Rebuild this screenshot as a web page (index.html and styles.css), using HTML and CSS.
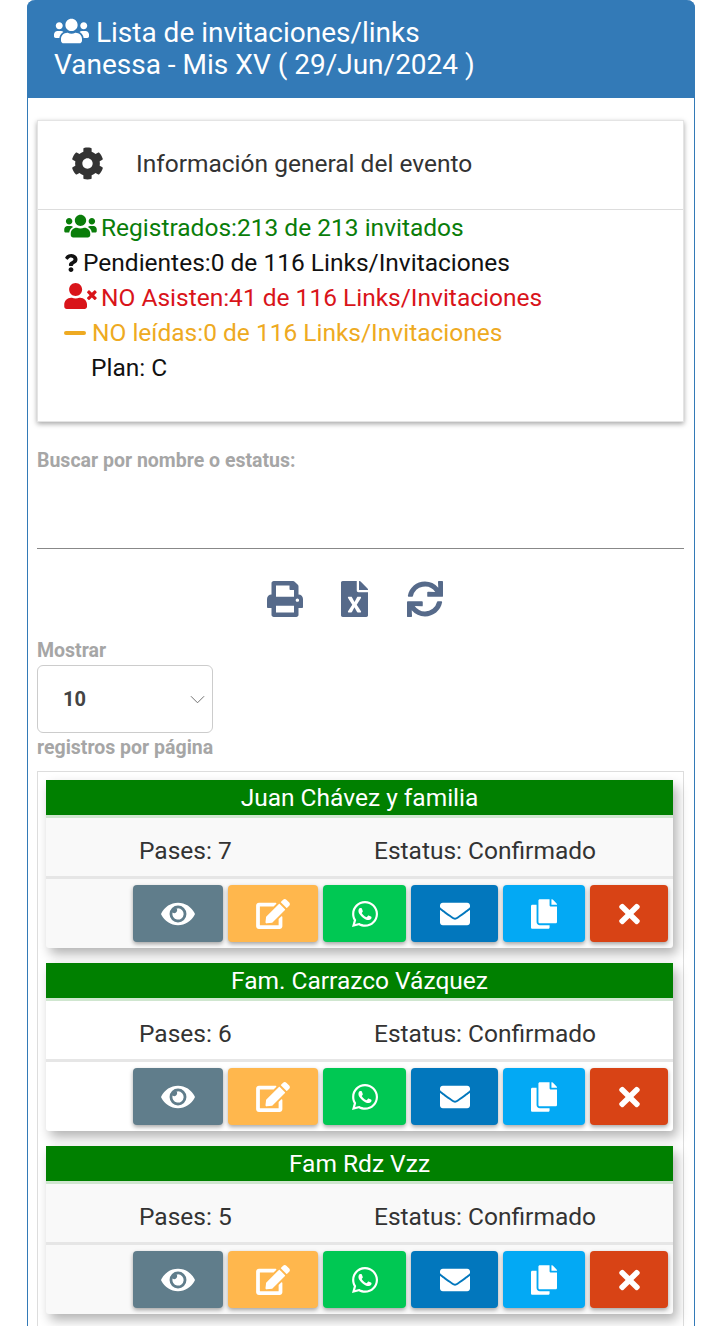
FILE: index.html
```html
<!DOCTYPE html>
<html>

<head>
  <meta charset="utf-8">
  <meta name="viewport" content="width=device-width, initial-scale=1.0">
  <title>Lista de invitaciones</title>
  <link rel="stylesheet" href="styles.css">
</head>

<body>
  <!-- icon set, used below with <use> -->
  <svg class="icon-defs" xmlns="http://www.w3.org/2000/svg">
    <symbol id="i-users" viewBox="0 0 640 512"><path d="M96 224c35.3 0 64-28.7 64-64s-28.7-64-64-64-64 28.7-64 64 28.7 64 64 64zm448 0c35.3 0 64-28.7 64-64s-28.7-64-64-64-64 28.7-64 64 28.7 64 64 64zm32 32h-64c-17.6 0-33.5 7.1-45.1 18.6 40.3 22.1 68.9 62 75.1 109.4h66c17.7 0 32-14.3 32-32v-32c0-35.3-28.7-64-64-64zm-256 0c61.9 0 112-50.1 112-112S381.9 32 320 32 208 82.1 208 144s50.1 112 112 112zm76.8 32h-8.3c-20.8 10-43.9 16-68.5 16s-47.6-6-68.5-16h-8.3C179.6 288 128 339.6 128 403.2V432c0 26.5 21.5 48 48 48h288c26.5 0 48-21.5 48-48v-28.8c0-63.6-51.6-115.2-115.2-115.2zm-223.7-13.4C161.5 263.1 145.6 256 128 256H64c-35.3 0-64 28.7-64 64v32c0 17.7 14.3 32 32 32h65.9c6.3-47.4 34.9-87.3 75.2-109.4z"/></symbol>
    <symbol id="i-cog" viewBox="0 0 512 512"><path d="M487.4 315.7l-42.6-24.6c4.3-23.2 4.3-47 0-70.2l42.6-24.6c4.9-2.8 7.1-8.6 5.5-14-11.1-35.6-30-67.8-54.7-94.6-3.8-4.1-10-5.1-14.8-2.3L380.8 110c-17.9-15.4-38.5-27.3-60.8-35.1V25.8c0-5.6-3.9-10.5-9.4-11.7-36.7-8.2-74.3-7.8-109.2 0-5.5 1.2-9.4 6.1-9.4 11.7V75c-22.2 7.9-42.8 19.8-60.8 35.1L88.7 85.5c-4.9-2.8-11-1.9-14.8 2.3-24.7 26.7-43.6 58.9-54.7 94.6-1.7 5.4.6 11.2 5.5 14L67.3 221c-4.3 23.2-4.3 47 0 70.2l-42.6 24.6c-4.9 2.8-7.1 8.6-5.5 14 11.1 35.6 30 67.8 54.7 94.6 3.8 4.1 10 5.1 14.8 2.3l42.6-24.6c17.9 15.4 38.5 27.3 60.8 35.1v49.2c0 5.6 3.9 10.5 9.4 11.7 36.7 8.2 74.3 7.8 109.2 0 5.5-1.2 9.4-6.1 9.4-11.7v-49.2c22.2-7.9 42.8-19.8 60.8-35.1l42.6 24.6c4.9 2.8 11 1.9 14.8-2.3 24.7-26.7 43.6-58.9 54.7-94.6 1.5-5.5-.7-11.3-5.6-14.1zM256 336c-44.1 0-80-35.9-80-80s35.9-80 80-80 80 35.9 80 80-35.9 80-80 80z"/></symbol>
    <symbol id="i-question" viewBox="0 0 384 512"><path d="M202.021 0C122.202 0 70.503 32.703 29.914 91.026c-7.363 10.58-5.093 25.086 5.178 32.874l43.138 32.709c10.373 7.865 25.132 6.026 33.253-4.148 25.049-31.381 43.63-49.449 82.757-49.449 30.764 0 68.816 19.799 68.816 49.631 0 22.552-18.617 34.134-48.993 51.164-35.423 19.86-82.299 44.576-82.299 106.405V320c0 13.255 10.745 24 24 24h72.471c13.255 0 24-10.745 24-24v-5.773c0-42.86 125.268-44.645 125.268-160.627C377.504 66.256 286.902 0 202.021 0zM192 373.459c-38.196 0-69.271 31.075-69.271 69.271 0 38.195 31.075 69.27 69.271 69.27s69.271-31.075 69.271-69.271-31.075-69.27-69.271-69.27z"/></symbol>
    <symbol id="i-user-times" viewBox="0 0 640 512"><path d="M589.6 240l45.6-45.6c6.3-6.3 6.3-16.5 0-22.8l-22.8-22.8c-6.3-6.3-16.5-6.3-22.8 0L544 194.4l-45.6-45.6c-6.3-6.3-16.5-6.3-22.8 0l-22.8 22.8c-6.3 6.3-6.3 16.5 0 22.8l45.6 45.6-45.6 45.6c-6.3 6.3-6.3 16.5 0 22.8l22.8 22.8c6.3 6.3 16.5 6.3 22.8 0l45.6-45.6 45.6 45.6c6.3 6.3 16.5 6.3 22.8 0l22.8-22.8c6.3-6.3 6.3-16.5 0-22.8L589.6 240zM224 256c70.7 0 128-57.3 128-128S294.7 0 224 0 96 57.3 96 128s57.3 128 128 128zm89.6 32h-16.7c-22.2 10.2-46.9 16-72.9 16s-50.6-5.8-72.9-16h-16.7C60.2 288 0 348.2 0 422.4V464c0 26.5 21.5 48 48 48h352c26.5 0 48-21.5 48-48v-41.6c0-74.2-60.2-134.4-134.4-134.4z"/></symbol>
    <symbol id="i-print" viewBox="0 0 512 512"><path d="M448 192V77.25c0-8.49-3.37-16.62-9.37-22.63L393.37 9.37c-6-6-14.14-9.37-22.63-9.37H96C78.33 0 64 14.33 64 32v160c-35.35 0-64 28.65-64 64v112c0 8.84 7.16 16 16 16h48v96c0 17.67 14.33 32 32 32h320c17.67 0 32-14.33 32-32v-96h48c8.84 0 16-7.16 16-16V256c0-35.35-28.65-64-64-64zm-64 256H128v-96h256v96zm0-224H128V64h192v48c0 8.84 7.16 16 16 16h48v96zm48 72c-13.25 0-24-10.75-24-24 0-13.26 10.75-24 24-24s24 10.74 24 24c0 13.25-10.75 24-24 24z"/></symbol>
    <symbol id="i-excel" viewBox="0 0 384 512"><path d="M224 136V0H24C10.7 0 0 10.7 0 24v464c0 13.3 10.7 24 24 24h336c13.3 0 24-10.7 24-24V160H248c-13.2 0-24-10.8-24-24zm60.1 106.5L224 336l60.1 93.5c5.1 8-.6 18.5-10.1 18.5h-34.9c-4.4 0-8.5-2.4-10.6-6.3C208.9 405.5 192 373 192 373c-6.4 14.8-10 20-36.6 68.8-2.1 3.9-6.1 6.3-10.5 6.3H110c-9.5 0-15.2-10.5-10.1-18.5l60.3-93.5-60.3-93.5c-5.2-8 .6-18.5 10.1-18.5h34.8c4.4 0 8.5 2.4 10.6 6.3 26.1 48.8 20 33.6 36.6 68.5 0 0 6.1-11.7 36.6-68.5 2.1-3.9 6.2-6.3 10.6-6.3H274c9.5-.1 15.2 10.4 10.1 18.4zM384 121.9v6.1H256V0h6.1c6.4 0 12.5 2.5 17 7l97.9 98c4.5 4.5 7 10.6 7 16.9z"/></symbol>
    <symbol id="i-sync" viewBox="0 0 512 512"><path d="M440.65 12.57l4 82.77A247.16 247.16 0 0 0 255.83 8C134.73 8 33.91 94.92 12.29 209.82A12 12 0 0 0 24.09 224h49.05a12 12 0 0 0 11.67-9.26 175.91 175.91 0 0 1 317-56.94l-101.46-4.86a12 12 0 0 0-12.57 12v47.41a12 12 0 0 0 12 12H500a12 12 0 0 0 12-12V12a12 12 0 0 0-12-12h-47.37a12 12 0 0 0-11.98 12.57zM255.83 432a175.61 175.61 0 0 1-146-77.8l101.8 4.87a12 12 0 0 0 12.57-12v-47.4a12 12 0 0 0-12-12H12a12 12 0 0 0-12 12V500a12 12 0 0 0 12 12h47.35a12 12 0 0 0 12-12.6l-4.15-82.57A247.17 247.17 0 0 0 255.83 504c121.11 0 221.93-86.92 243.55-201.82a12 12 0 0 0-11.8-14.18h-49.05a12 12 0 0 0-11.67 9.26A175.86 175.86 0 0 1 255.83 432z"/></symbol>
    <symbol id="i-eye" viewBox="0 0 576 512"><path d="M572.52 241.4C518.29 135.59 410.93 64 288 64S57.68 135.64 3.48 241.41a32.35 32.35 0 0 0 0 29.19C57.71 376.41 165.07 448 288 448s230.32-71.64 284.52-177.41a32.35 32.35 0 0 0 0-29.19zM288 400a144 144 0 1 1 144-144 143.93 143.93 0 0 1-144 144zm0-240a95.31 95.31 0 0 0-25.31 3.79 47.85 47.85 0 0 1-66.9 66.9A95.78 95.78 0 1 0 288 160z"/></symbol>
    <symbol id="i-edit" viewBox="0 0 576 512"><path d="M402.6 83.2l90.2 90.2c3.8 3.8 3.8 10 0 13.8L274.4 405.6l-92.8 10.3c-12.4 1.4-22.9-9.1-21.5-21.5l10.3-92.8L388.8 83.2c3.8-3.8 10-3.8 13.8 0zm162-22.9l-48.8-48.8c-15.2-15.2-39.9-15.2-55.2 0l-35.4 35.4c-3.8 3.8-3.8 10 0 13.8l90.2 90.2c3.8 3.8 10 3.8 13.8 0l35.4-35.4c15.2-15.3 15.2-40 0-55.2zM384 346.2V448H64V128h229.8c3.2 0 6.2-1.3 8.5-3.5l40-40c7.6-7.6 2.2-20.5-8.5-20.5H48C21.5 64 0 85.5 0 112v352c0 26.5 21.5 48 48 48h352c26.5 0 48-21.5 48-48V306.2c0-10.7-12.9-16-20.5-8.5l-40 40c-2.2 2.3-3.5 5.3-3.5 8.5z"/></symbol>
    <symbol id="i-whatsapp" viewBox="0 0 448 512"><path d="M380.9 97.1C339 55.1 283.2 32 223.9 32c-122.4 0-222 99.6-222 222 0 39.1 10.2 77.3 29.6 111L0 480l117.7-30.9c32.4 17.7 68.9 27 106.1 27h.1c122.3 0 224.1-99.6 224.1-222 0-59.3-25.2-115-67.1-157zm-157 341.6c-33.2 0-65.7-8.9-94-25.7l-6.7-4-69.8 18.3L72 359.2l-4.4-7c-18.5-29.4-28.2-63.3-28.2-98.2 0-101.7 82.8-184.5 184.6-184.5 49.3 0 95.6 19.2 130.4 54.1 34.8 34.9 56.2 81.2 56.1 130.5 0 101.8-84.9 184.6-186.6 184.6zm101.2-138.2c-5.5-2.8-32.8-16.2-37.9-18-5.1-1.9-8.8-2.8-12.5 2.8-3.7 5.6-14.3 18-17.6 21.8-3.2 3.7-6.5 4.2-12 1.4-32.6-16.3-54-29.1-75.5-66-5.7-9.8 5.7-9.1 16.3-30.3 1.8-3.7.9-6.9-.5-9.7-1.4-2.8-12.5-30.1-17.1-41.2-4.5-10.8-9.1-9.3-12.5-9.5-3.2-.2-6.9-.2-10.6-.2-3.7 0-9.7 1.4-14.8 6.9-5.1 5.6-19.4 19-19.4 46.3 0 27.3 19.9 53.7 22.6 57.4 2.8 3.7 39.1 59.7 94.8 83.8 35.2 15.2 49 16.5 66.6 13.9 10.7-1.6 32.8-13.4 37.4-26.4 4.6-13 4.6-24.1 3.2-26.4-1.3-2.5-5-3.9-10.5-6.6z"/></symbol>
    <symbol id="i-envelope" viewBox="0 0 512 512"><path d="M502.3 190.8c3.9-3.1 9.7-.2 9.7 4.7V400c0 26.5-21.5 48-48 48H48c-26.5 0-48-21.5-48-48V195.6c0-5 5.7-7.8 9.7-4.7 22.4 17.4 52.1 39.5 154.1 113.6 21.1 15.4 56.7 47.8 92.2 47.6 35.7.3 72-32.8 92.3-47.6 102-74.1 131.6-96.3 154-113.7zM256 320c23.2.4 56.6-29.2 73.4-41.4 132.7-96.3 142.8-104.7 173.4-128.7 5.8-4.5 9.2-11.5 9.2-18.9v-19c0-26.5-21.5-48-48-48H48C21.5 64 0 85.5 0 112v19c0 7.4 3.4 14.3 9.2 18.9 30.6 23.9 40.7 32.4 173.4 128.7 16.8 12.2 50.2 41.8 73.4 41.4z"/></symbol>
    <symbol id="i-copy" viewBox="0 0 448 512"><path d="M320 448v40c0 13.255-10.745 24-24 24H24c-13.255 0-24-10.745-24-24V120c0-13.255 10.745-24 24-24h72v296c0 30.879 25.121 56 56 56h168zm0-344V0H152c-13.255 0-24 10.745-24 24v368c0 13.255 10.745 24 24 24h272c13.255 0 24-10.745 24-24V128H344c-13.2 0-24-10.8-24-24zm120.971-31.029L375.029 7.029A24 24 0 0 0 358.059 0H352v96h96v-6.059a24 24 0 0 0-7.029-16.97z"/></symbol>
    <symbol id="i-times" viewBox="0 0 352 512"><path d="M242.72 256l100.07-100.07c12.28-12.28 12.28-32.19 0-44.48l-22.24-22.24c-12.28-12.28-32.19-12.28-44.48 0L176 189.28 75.93 89.21c-12.28-12.28-32.19-12.28-44.48 0L9.21 111.45c-12.28 12.28-12.28 32.19 0 44.48L109.28 256 9.21 356.07c-12.28 12.28-12.28 32.19 0 44.48l22.24 22.24c12.28 12.28 32.2 12.28 44.48 0L176 322.72l100.07 100.07c12.28 12.28 32.2 12.28 44.48 0l22.24-22.24c12.28-12.28 12.28-32.19 0-44.48L242.72 256z"/></symbol>
  </svg>

  <div class="panel">
    <div class="panel-heading">
      <div><svg class="title-icon"><use href="#i-users"/></svg> Lista de invitaciones/links</div>
      <div>Vanessa - Mis XV ( 29/Jun/2024 )</div>
    </div>

    <div class="panel-body">
      <div class="info-card">
        <div class="info-head">
          <svg class="cog-icon"><use href="#i-cog"/></svg>
          <span>Información general del evento</span>
        </div>
        <div class="info-list">
          <div class="info-line green"><svg class="ic-wide"><use href="#i-users"/></svg>Registrados:213 de 213 invitados</div>
          <div class="info-line black"><svg class="ic-question"><use href="#i-question"/></svg>Pendientes:0 de 116 Links/Invitaciones</div>
          <div class="info-line red"><svg class="ic-wide"><use href="#i-user-times"/></svg>NO Asisten:41 de 116 Links/Invitaciones</div>
          <div class="info-line orange"><span class="ic-minus"></span>NO leídas:0 de 116 Links/Invitaciones</div>
          <div class="info-line black plan">Plan: C</div>
        </div>
      </div>

      <label class="field-label search-label" for="search">Buscar por nombre o estatus:</label>
      <input class="search-input" id="search" type="text">

      <div class="tools">
        <svg class="tool-print"><use href="#i-print"/></svg>
        <svg class="tool-excel"><use href="#i-excel"/></svg>
        <svg class="tool-sync"><use href="#i-sync"/></svg>
      </div>

      <label class="field-label mostrar-label" for="perpage">Mostrar</label>
      <div class="select-wrap">
        <select id="perpage">
          <option>10</option>
          <option>25</option>
          <option>50</option>
        </select>
        <svg class="chevron" viewBox="0 0 16 9"><path d="M1 1l7 7 7-7" fill="none" stroke="#666" stroke-width="1"/></svg>
      </div>
      <div class="field-label perpage-label">registros por página</div>

      <div class="list-box">
        <div class="guest odd">
          <div class="guest-name">Juan Chávez y familia</div>
          <div class="guest-data"><span class="pases">Pases: 7</span><span>Estatus: Confirmado</span></div>
          <div class="guest-actions">
            <button class="btn b-view"><svg><use href="#i-eye"/></svg></button>
            <button class="btn b-edit"><svg><use href="#i-edit"/></svg></button>
            <button class="btn b-wa"><svg><use href="#i-whatsapp"/></svg></button>
            <button class="btn b-mail"><svg><use href="#i-envelope"/></svg></button>
            <button class="btn b-copy"><svg><use href="#i-copy"/></svg></button>
            <button class="btn b-del"><svg><use href="#i-times"/></svg></button>
          </div>
        </div>

        <div class="guest">
          <div class="guest-name">Fam. Carrazco Vázquez</div>
          <div class="guest-data"><span class="pases">Pases: 6</span><span>Estatus: Confirmado</span></div>
          <div class="guest-actions">
            <button class="btn b-view"><svg><use href="#i-eye"/></svg></button>
            <button class="btn b-edit"><svg><use href="#i-edit"/></svg></button>
            <button class="btn b-wa"><svg><use href="#i-whatsapp"/></svg></button>
            <button class="btn b-mail"><svg><use href="#i-envelope"/></svg></button>
            <button class="btn b-copy"><svg><use href="#i-copy"/></svg></button>
            <button class="btn b-del"><svg><use href="#i-times"/></svg></button>
          </div>
        </div>

        <div class="guest odd">
          <div class="guest-name">Fam Rdz Vzz</div>
          <div class="guest-data"><span class="pases">Pases: 5</span><span>Estatus: Confirmado</span></div>
          <div class="guest-actions">
            <button class="btn b-view"><svg><use href="#i-eye"/></svg></button>
            <button class="btn b-edit"><svg><use href="#i-edit"/></svg></button>
            <button class="btn b-wa"><svg><use href="#i-whatsapp"/></svg></button>
            <button class="btn b-mail"><svg><use href="#i-envelope"/></svg></button>
            <button class="btn b-copy"><svg><use href="#i-copy"/></svg></button>
            <button class="btn b-del"><svg><use href="#i-times"/></svg></button>
          </div>
        </div>
      </div>
    </div>
  </div>
</body>

</html>
```

FILE: styles.css
```css
body {
  margin: 0;
  background-color: #fff;
  font-family: Roboto, "Liberation Sans", sans-serif;
  color: #333;
}

.icon-defs {
  display: none;
}

svg {
  fill: currentColor;
}

.panel {
  box-sizing: border-box;
  width: 668px;
  height: 1326px;
  margin-left: 27px;
  border: 1px solid #337ab7;
  border-top: none;
  border-bottom: none;
  border-radius: 8px 8px 0 0;
}

.panel-heading {
  box-sizing: border-box;
  height: 98px;
  padding: 17px 27px 0;
  margin: 0 -1px;
  background-color: #337ab7;
  border-radius: 8px 8px 0 0;
  color: #fff;
  font-size: 28px;
  line-height: 32px;
}

.title-icon {
  width: 35px;
  height: 28px;
  vertical-align: -3px;
}

.panel-body {
  padding: 22px 10px 0 9px;
}

.info-card {
  height: 302px;
  box-sizing: border-box;
  border: 1px solid #e4e4e4;
  box-shadow: 0 2px 5px rgba(0, 0, 0, 0.35);
}

.info-head {
  box-sizing: border-box;
  display: flex;
  align-items: center;
  height: 89px;
  padding-bottom: 3px;
  border-bottom: 1px solid #ddd;
  font-size: 24.5px;
  color: #333;
}

.cog-icon {
  width: 33px;
  height: 33px;
  margin: 0 32px 0 33px;
}

.info-list {
  padding: 0 26px;
  font-size: 24.5px;
  line-height: 35px;
}

.info-line svg {
  height: 26px;
  vertical-align: -3px;
}

.ic-wide {
  width: 33px;
  margin-right: 4px;
}

.ic-question {
  width: 14px;
  height: 18px !important;
  margin-right: 5px;
  vertical-align: -1px !important;
}

.ic-minus {
  display: inline-block;
  width: 22px;
  height: 4px;
  margin-right: 6px;
  border-radius: 2px;
  background-color: currentColor;
  vertical-align: 6px;
}

.green {
  color: #0a7d0a;
}

.black {
  color: #111;
}

.red {
  color: #d9141a;
}

.orange {
  color: #eeaa22;
}

.plan {
  padding-left: 27px;
}

.field-label {
  display: block;
  font-size: 19.5px;
  line-height: 22px;
  font-weight: bold;
  color: #a6a6a6;
}

.search-label {
  margin-top: 28px;
}

.search-input {
  display: block;
  box-sizing: border-box;
  width: 100%;
  height: 77px;
  border: none;
  border-bottom: 1px solid #888;
  outline: none;
}

.tools {
  display: flex;
  justify-content: center;
  align-items: center;
  height: 100px;
  padding-right: 12px;
  color: #566a8a;
}

.tool-print,
.tool-sync {
  width: 36px;
  height: 36px;
}

.tool-excel {
  width: 27px;
  height: 36px;
  margin: 0 39px 0 38px;
}

.mostrar-label {
  margin-top: -9px;
}

.select-wrap {
  position: relative;
  width: 176px;
  height: 68px;
  margin-top: 3px;
}

.select-wrap select {
  box-sizing: border-box;
  width: 100%;
  height: 100%;
  padding-left: 25px;
  appearance: none;
  background-color: #fff;
  border: 1px solid #ccc;
  border-radius: 6px;
  font-family: inherit;
  font-size: 20px;
  font-weight: bold;
  color: #444;
}

.chevron {
  position: absolute;
  top: 30px;
  right: 8px;
  width: 15px;
  height: 9px;
}

.perpage-label {
  margin-top: 4px;
}

.list-box {
  box-sizing: border-box;
  height: 555px;
  margin-top: 12px;
  padding: 8px 10px 0 8px;
  border: 1px solid #ddd;
  border-bottom: none;
}

.guest {
  height: 168px;
  margin-bottom: 15px;
  background-color: #fff;
  border-radius: 3px;
  box-shadow: 4px 6px 12px rgba(0, 0, 0, 0.3);
}

.guest:last-child {
  margin-bottom: 0;
}

.guest.odd {
  background-color: #f9f9f9;
}

.guest-name {
  height: 35px;
  background-color: #008000;
  color: #fff;
  font-size: 24.5px;
  line-height: 36px;
  text-align: center;
  border-bottom: 3px solid #cfe6cf;
}

.guest-data {
  box-sizing: border-box;
  display: flex;
  align-items: center;
  height: 61px;
  padding: 6px 0 0 93px;
  border-bottom: 3px solid #e6e6e6;
  font-size: 24.5px;
}

.pases {
  width: 235px;
}

.guest-actions {
  display: flex;
  justify-content: flex-end;
  gap: 5px;
  padding: 6px 5px 0 0;
}

.btn {
  display: flex;
  justify-content: center;
  align-items: center;
  height: 57px;
  padding: 0;
  border: none;
  border-radius: 4px;
  color: #fff;
  box-shadow: 0 2px 4px rgba(0, 0, 0, 0.35);
}

.btn svg {
  height: 30px;
}

.b-view {
  width: 90px;
  background-color: #607d8b;
}

.b-view svg,
.b-edit svg {
  width: 34px;
}

.b-edit {
  width: 90px;
  background-color: #ffb74d;
}

.b-wa {
  width: 83px;
  background-color: #00c853;
}

.b-wa svg,
.b-copy svg {
  width: 26px;
}

.b-mail {
  width: 87px;
  background-color: #0277bd;
}

.b-mail svg {
  width: 30px;
}

.b-copy {
  width: 82px;
  background-color: #03a9f4;
}

.b-del {
  width: 78px;
  background-color: #d84315;
}

.b-del svg {
  width: 21px;
}
```
